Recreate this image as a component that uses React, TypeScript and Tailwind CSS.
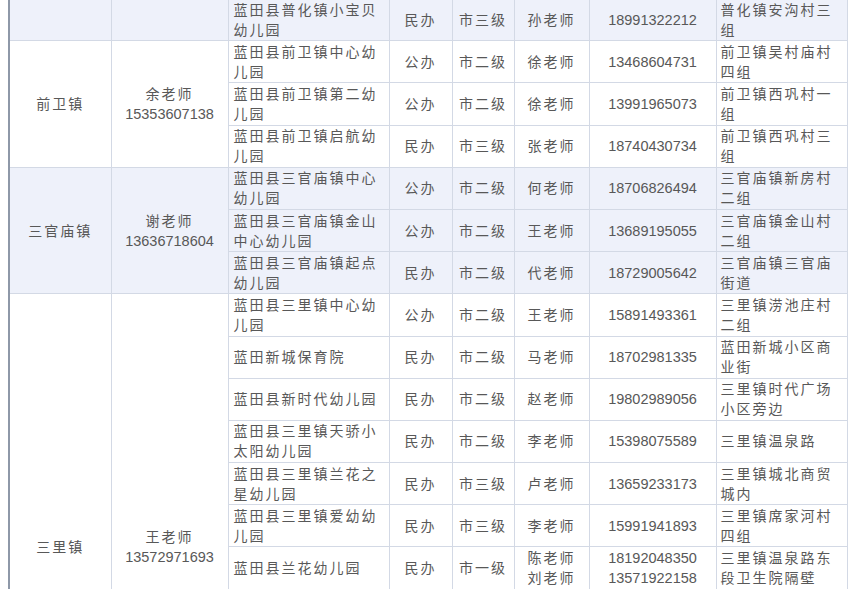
import React from 'react';

type Row = {
    school: string;
    kind: string;
    level: string;
    teacher: string;
    phone: string;
    address: string;
};

type Group = {
    town: string;
    contact: string;
    contactPhone: string;
    shaded: boolean;
    rows: Row[];
    labelTop?: boolean;
};

const groups: Group[] = [
    {
        town: '',
        contact: '',
        contactPhone: '',
        shaded: true,
        rows: [
            { school: '蓝田县普化镇小宝贝\n幼儿园', kind: '民办', level: '市三级', teacher: '孙老师', phone: '18991322212', address: '普化镇安沟村三\n组' },
        ],
    },
    {
        town: '前卫镇',
        contact: '余老师',
        contactPhone: '15353607138',
        shaded: false,
        rows: [
            { school: '蓝田县前卫镇中心幼\n儿园', kind: '公办', level: '市二级', teacher: '徐老师', phone: '13468604731', address: '前卫镇吴村庙村\n四组' },
            { school: '蓝田县前卫镇第二幼\n儿园', kind: '公办', level: '市二级', teacher: '徐老师', phone: '13991965073', address: '前卫镇西巩村一\n组' },
            { school: '蓝田县前卫镇启航幼\n儿园', kind: '民办', level: '市三级', teacher: '张老师', phone: '18740430734', address: '前卫镇西巩村三\n组' },
        ],
    },
    {
        town: '三官庙镇',
        contact: '谢老师',
        contactPhone: '13636718604',
        shaded: true,
        rows: [
            { school: '蓝田县三官庙镇中心\n幼儿园', kind: '公办', level: '市二级', teacher: '何老师', phone: '18706826494', address: '三官庙镇新房村\n二组' },
            { school: '蓝田县三官庙镇金山\n中心幼儿园', kind: '公办', level: '市二级', teacher: '王老师', phone: '13689195055', address: '三官庙镇金山村\n二组' },
            { school: '蓝田县三官庙镇起点\n幼儿园', kind: '民办', level: '市二级', teacher: '代老师', phone: '18729005642', address: '三官庙镇三官庙\n街道' },
        ],
    },
    {
        town: '三里镇',
        contact: '王老师',
        contactPhone: '13572971693',
        shaded: false,
        labelTop: true,
        rows: [
            { school: '蓝田县三里镇中心幼\n儿园', kind: '公办', level: '市二级', teacher: '王老师', phone: '15891493361', address: '三里镇涝池庄村\n二组' },
            { school: '蓝田新城保育院', kind: '民办', level: '市二级', teacher: '马老师', phone: '18702981335', address: '蓝田新城小区商\n业街' },
            { school: '蓝田县新时代幼儿园', kind: '民办', level: '市二级', teacher: '赵老师', phone: '19802989056', address: '三里镇时代广场\n小区旁边' },
            { school: '蓝田县三里镇天骄小\n太阳幼儿园', kind: '民办', level: '市二级', teacher: '李老师', phone: '15398075589', address: '三里镇温泉路' },
            { school: '蓝田县三里镇兰花之\n星幼儿园', kind: '民办', level: '市三级', teacher: '卢老师', phone: '13659233173', address: '三里镇城北商贸\n城内' },
            { school: '蓝田县三里镇爱幼幼\n儿园', kind: '民办', level: '市三级', teacher: '李老师', phone: '15991941893', address: '三里镇席家河村\n四组' },
            { school: '蓝田县兰花幼儿园', kind: '民办', level: '市一级', teacher: '陈老师\n刘老师', phone: '18192048350\n13571922158', address: '三里镇温泉路东\n段卫生院隔壁' },
        ],
    },
];

const cell = 'border border-[#d3d9e5] p-0 align-middle whitespace-pre-line leading-[20px]';
const cn = 'tracking-[2px]';

const App: React.FC = () => {
    return (
        <div
            className="h-[589px] w-[864px] overflow-hidden bg-white text-[14px] text-[#585858]"
            style={{ fontFamily: '"Liberation Sans", "Noto Sans CJK SC", sans-serif' }}
        >
            <table className="-mt-[2px] ml-[8px] w-[838px] table-fixed border-collapse border-l-2 border-r border-l-[#8e98a8] border-r-[#aab4c6]">
                <colgroup>
                    <col className="w-[102px]" />
                    <col className="w-[117px]" />
                    <col className="w-[161px]" />
                    <col className="w-[63px]" />
                    <col className="w-[62px]" />
                    <col className="w-[75px]" />
                    <col className="w-[127px]" />
                    <col className="w-[131px]" />
                </colgroup>
                <tbody>
                    {groups.map((g, gi) =>
                        g.rows.map((r, ri) => (
                            <tr key={`${gi}-${ri}`} className={`h-[42.2px] ${g.shaded ? 'bg-[#eef1fa]' : 'bg-white'}`}>
                                {ri === 0 && (
                                    <>
                                        <td
                                            rowSpan={g.rows.length}
                                            className={`${cell} ${cn} text-center ${g.labelTop ? 'align-top pt-[243px]' : ''}`}
                                        >
                                            {g.town}
                                        </td>
                                        <td
                                            rowSpan={g.rows.length}
                                            className={`${cell} text-center ${g.labelTop ? 'align-top pt-[233px]' : ''}`}
                                        >
                                            {g.contact && <span className={cn}>{g.contact}</span>}
                                            {g.contact && <br />}
                                            <span className="text-[14.5px]">{g.contactPhone}</span>
                                        </td>
                                    </>
                                )}
                                <td className={`${cell} ${cn} pl-[5px] text-left`}>{r.school}</td>
                                <td className={`${cell} ${cn} text-center`}>{r.kind}</td>
                                <td className={`${cell} ${cn} text-center`}>{r.level}</td>
                                <td className={`${cell} ${cn} text-center`}>{r.teacher}</td>
                                <td className={`${cell} text-center text-[14.5px]`}>{r.phone}</td>
                                <td className={`${cell} ${cn} pl-[4px] text-left`}>{r.address}</td>
                            </tr>
                        ))
                    )}
                </tbody>
            </table>
        </div>
    );
};

export default App;
